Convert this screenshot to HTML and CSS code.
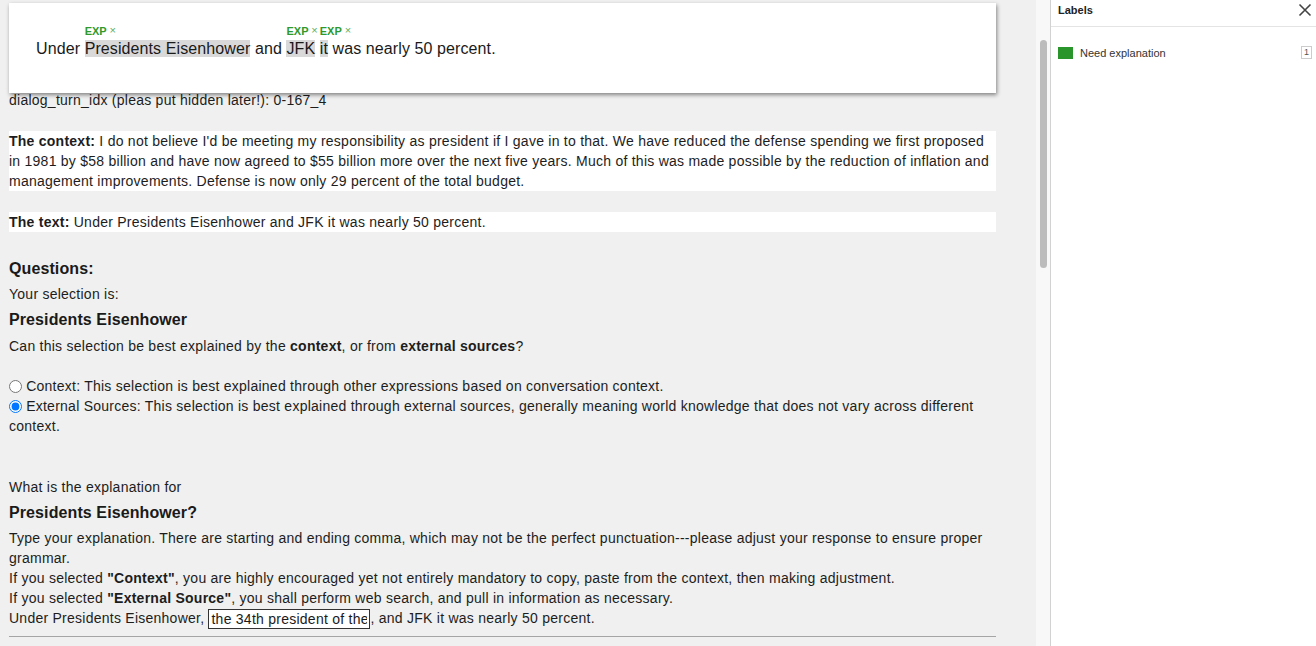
FILE: index.html
```html
<!DOCTYPE html>
<html>
<head>
<meta charset="utf-8">
<link rel="stylesheet" href="styles.css">
</head>
<body>
<div class="app">
  <main class="main">
    <div class="card">
      <p class="sentence">Under <span class="hl"><span class="tag">EXP <i>×</i></span>Presidents Eisenhower</span> and <span class="hl"><span class="tag">EXP <i>×</i></span>JFK</span> <span class="hl"><span class="tag">EXP <i>×</i></span>it</span> was nearly 50 percent.</p>
    </div>
    <p class="idx">dialog_turn_idx (pleas put hidden later!): 0-167_4</p>
    <p class="block ctx"><b>The context:</b> I do not believe I'd be meeting my responsibility as president if I gave in to that. We have reduced the defense spending we first proposed in 1981 by $58 billion and have now agreed to $55 billion more over the next five years. Much of this was made possible by the reduction of inflation and management improvements. Defense is now only 29 percent of the total budget.</p>
    <p class="block txt"><b>The text:</b> Under Presidents Eisenhower and JFK it was nearly 50 percent.</p>
    <h3 class="h q">Questions:</h3>
    <p class="line sel">Your selection is:</p>
    <h3 class="h sel2">Presidents Eisenhower</h3>
    <p class="line can">Can this selection be best explained by the <b>context</b>, or from <b>external sources</b>?</p>
    <div class="radios">
      <label class="radio"><input type="radio" name="src"> Context: This selection is best explained through other expressions based on conversation context.</label>
      <label class="radio"><input type="radio" name="src" checked> External Sources: This selection is best explained through external sources, generally meaning world knowledge that does not vary across different context.</label>
    </div>
    <p class="line what">What is the explanation for</p>
    <h3 class="h sel2">Presidents Eisenhower?</h3>
    <div class="instr">
      <p>Type your explanation. There are starting and ending comma, which may not be the perfect punctuation---please adjust your response to ensure proper grammar.</p>
      <p>If you selected <b>"Context"</b>, you are highly encouraged yet not entirely mandatory to copy, paste from the context, then making adjustment.</p>
      <p>If you selected <b>"External Source"</b>, you shall perform web search, and pull in information as necessary.</p>
      <p>Under Presidents Eisenhower, <input class="ans" type="text" value="the 34th president of the United States">, and JFK it was nearly 50 percent.</p>
    </div>
    <hr class="rule">
  </main>
  <div class="scroll"><div class="thumb"></div></div>
  <aside class="side">
    <div class="side-head">
      <span class="side-title">Labels</span>
      <svg class="close" width="14" height="14" viewBox="0 0 14 14"><path d="M1.5 1.5 L12.5 12.5 M12.5 1.5 L1.5 12.5" stroke="#444" stroke-width="1.6" fill="none"/></svg>
    </div>
    <div class="label-row">
      <span class="swatch"></span>
      <span class="label-name">Need explanation</span>
      <span class="key">1</span>
    </div>
  </aside>
</div>
</body>
</html>
```
FILE: styles.css
```css
* { box-sizing: border-box; }
html, body { margin: 0; padding: 0; height: 100%; overflow: hidden; }
body {
  font-family: "Liberation Sans", Arial, sans-serif;
  font-size: 14px;
  letter-spacing: 0.25px;
  color: #1d1d1d;
  background: #eff0ef;
}
.app { display: flex; height: 646px; }
.main {
  width: 1036px;
  flex: none;
  padding: 3px 40px 0 9px;
  display: flex;
  flex-direction: column;
  overflow: hidden;
}
p, h3 { margin: 0; }
.card {
  background: #fff;
  height: 90px;
  flex: none;
  box-shadow: 1px 2px 4px rgba(0,0,0,0.45);
  padding: 36px 0 0 27px;
  margin-bottom: -2px;
  position: relative;
  z-index: 1;
}
.sentence { font-size: 16px; line-height: 20px; color: #1a1a1a; letter-spacing: 0.1px; }
.hl { background: #d9d9da; position: relative; }
.tag {
  position: absolute;
  left: 0;
  top: -15px;
  font-size: 11px;
  line-height: 12px;
  font-weight: bold;
  letter-spacing: 0;
  color: #2e9a2e;
  white-space: nowrap;
}
.tag i { font-style: normal; font-weight: normal; color: #5db05d; position: relative; top: -1px; }
.idx { line-height: 20px; margin-top: -1px; }
.block { background: #fff; line-height: 20px; }
.ctx { margin-top: 21px; }
.txt { margin-top: 21px; }
.h { font-size: 16px; line-height: 20px; font-weight: bold; color: #1a1a1a; letter-spacing: 0.1px; }
.q { margin-top: 27px; }
.line { line-height: 20px; }
.sel { margin-top: 5px; }
.sel2 { margin-top: 6px; }
.can { margin-top: 6px; }
.radios { margin-top: 20px; display: flex; flex-direction: column; }
.radio { line-height: 20px; display: block; }
.radio input { margin: 0; width: 13px; height: 13px; vertical-align: -2px; }
.what { margin-top: 41px; }
.instr { margin-top: 5px; }
.instr p { line-height: 20px; }
.ans {
  width: 162px;
  height: 20px;
  border: 1px solid #333;
  background: #fff;
  font: 14px "Liberation Sans", Arial, sans-serif;
  letter-spacing: 0.25px;
  color: #1a1a1a;
  padding: 0 2px;
  margin: 0;
  vertical-align: -1px;
  outline: none;
}
.rule {
  margin: 7px 0 0 0;
  border: 0;
  border-top: 1px solid #a5a5a5;
  height: 0;
}
.scroll {
  width: 15px;
  flex: none;
  background: #f8f8f8;
  border-right: 1px solid #d2d2d2;
  padding: 40px 3px 0 4px;
}
.thumb { height: 228px; background: #bcbcbc; border-radius: 4px; }
.side { flex: 1; background: #fff; display: flex; flex-direction: column; letter-spacing: 0; }
.side-head {
  height: 27px;
  border-bottom: 1px solid #e4e4e4;
  display: flex;
  align-items: center;
  justify-content: space-between;
  padding: 0 4px 6px 7px;
}
.side-title { font-size: 11px; font-weight: bold; color: #222; }
.label-row {
  display: flex;
  align-items: center;
  padding: 19px 4px 0 7px;
}
.swatch { width: 15px; height: 12px; background: #2a952a; }
.label-name { font-size: 11px; color: #333; margin-left: 7px; flex: 1; }
.key {
  font-size: 9px;
  color: #555;
  border: 1px solid #ccc;
  width: 11px;
  height: 13px;
  text-align: center;
  line-height: 11px;
}
```
